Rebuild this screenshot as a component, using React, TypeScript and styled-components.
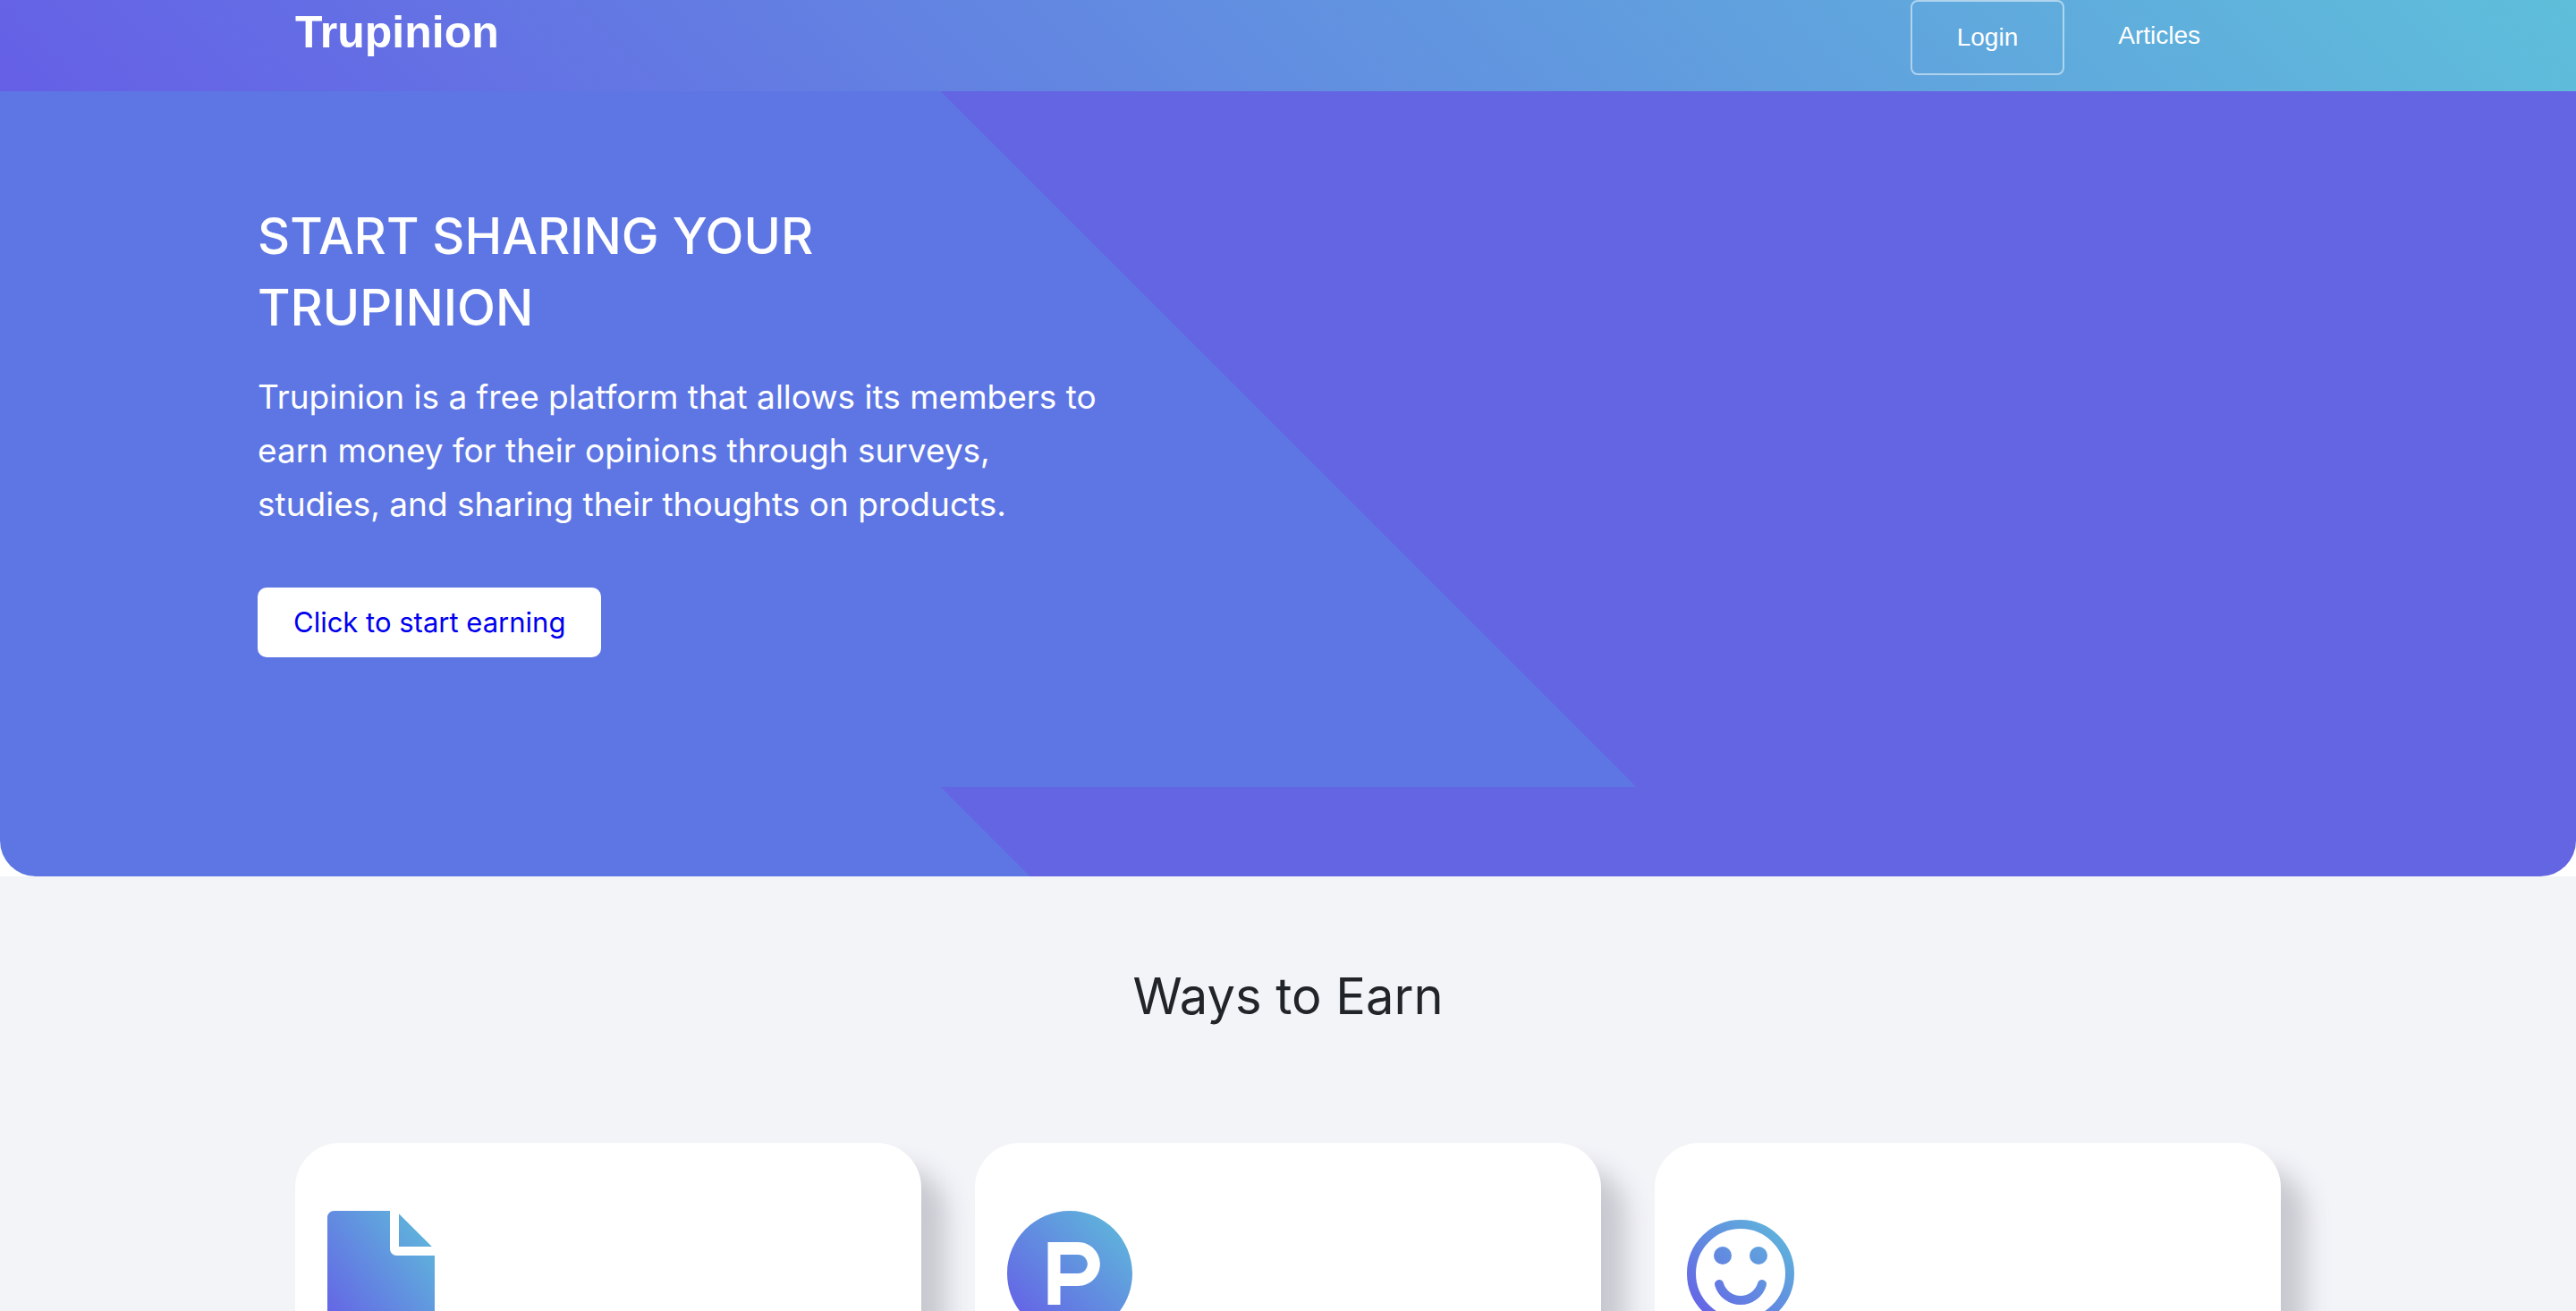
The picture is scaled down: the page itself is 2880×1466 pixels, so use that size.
import React from "react";
import styled, { createGlobalStyle } from "styled-components";

const GlobalStyle = createGlobalStyle`
  *, *::before, *::after { box-sizing: border-box; }
  body {
    margin: 0;
    background: #fff;
    color: #212529;
    font-family: Inter, "Liberation Sans", sans-serif;
  }
  h1, h2, p { margin: 0; font-weight: 400; }
  a { text-decoration: none; }
`;

const Page = styled.div`
  height: 100vh;
  overflow: hidden;
`;

const Header = styled.header`
  background: linear-gradient(45deg, #655fe6, #5ebfda);
  font-family: "Liberation Sans", Arial, sans-serif;
`;

const Container = styled.div`
  max-width: 2280px;
  margin: 0 auto;
  padding: 0 30px;
`;

const Bar = styled(Container)`
  display: flex;
  justify-content: space-between;
  align-items: flex-start;
  padding-bottom: 18px;
`;

const Brand = styled.a`
  color: #fff;
  font-size: 50px;
  font-weight: 700;
  line-height: 72px;
`;

const Nav = styled.nav`
  display: flex;
  gap: 60px;
  padding-right: 90px;
`;

const NavLink = styled.a`
  color: #fff;
  font-size: 28px;
  line-height: 80px;
`;

const LoginButton = styled.button`
  padding: 0 50px;
  border: 2px solid rgba(255, 255, 255, 0.5);
  border-radius: 8px;
  background: transparent;
  color: #fff;
  font-family: inherit;
  font-size: 28px;
  line-height: 80px;
`;

const Hero = styled.section`
  padding: 122px 10% 245px;
  border-radius: 0 0 40px 40px;
  background-image: linear-gradient(45deg, #5e76e3 50%, #6465e3 50%);
  background-size: 100% calc(100% - 100px);
`;

const HeroTitle = styled.h1`
  font-size: 56px;
  font-weight: 500;
  line-height: 80px;
  color: #fff;
`;

const HeroText = styled.p`
  margin: 30px 0 63px;
  font-size: 37px;
  line-height: 60px;
  color: #fff;
`;

const StartLink = styled.a`
  display: inline-block;
  padding: 0 40px;
  border-radius: 10px;
  background: #fff;
  color: #0000ee;
  font-size: 31px;
  line-height: 78px;
`;

const Ways = styled.section`
  background: #f3f4f8;
`;

const WaysTitle = styled.h2`
  padding: 92px 0;
  font-size: 56px;
  line-height: 84px;
  text-align: center;
`;

const Cards = styled.div`
  display: grid;
  grid-template-columns: repeat(3, 1fr);
  gap: 60px;
  padding: 30px 0 60px;
`;

const Card = styled.article`
  min-height: 800px;
  padding: 76px 36px;
  border-radius: 50px;
  background: #fff;
  box-shadow: 28px 28px 28px #c8c9d0;
`;

const Icon = styled.svg`
  display: block;
`;

const IconGradient = ({ id }: { id: string }) => (
  <linearGradient id={id} x1="0" y1="1" x2="1" y2="0">
    <stop offset="0.08" stopColor="#655fe6" />
    <stop offset="1" stopColor="#5ebfda" />
  </linearGradient>
);

const FileIcon = () => (
  <Icon width="120" height="160" viewBox="0 0 384 512" aria-hidden="true">
    <IconGradient id="file-fill" />
    <path
      fill="url(#file-fill)"
      d="M224 136V0H24C10.700 0 0 10.700 0 24v464c0 13.300 10.700 24 24 24h336c13.300 0 24-10.700 24-24V160H248c-13.200 0-24-10.800-24-24zM374 128H256V10z"
    />
  </Icon>
);

const ProductIcon = () => (
  <Icon width="140" height="140" viewBox="8 8 496 496" aria-hidden="true">
    <IconGradient id="product-fill" />
    <path
      fill="url(#product-fill)"
      d="M326.300 218.800c0 20.500-16.700 37.200-37.200 37.200h-70.300v-74.400h70.300c20.500 0 37.200 16.700 37.200 37.200zM504 256c0 137-111 248-248 248S8 393 8 256 119 8 256 8s248 111 248 248zm-128.100-37.200c0-47.900-38.900-86.800-86.800-86.800H169.200v248h49.600v-74.400h70.300c47.900 0 86.800-38.900 86.800-86.800z"
    />
  </Icon>
);

const SmileIcon = () => (
  <Icon width="120" height="140" viewBox="0 0 120 140" aria-hidden="true">
    <linearGradient
      id="smile-fill"
      gradientUnits="userSpaceOnUse"
      x1="0"
      y1="130"
      x2="120"
      y2="10"
    >
      <stop offset="0.08" stopColor="#655fe6" />
      <stop offset="1" stopColor="#5ebfda" />
    </linearGradient>
    <g fill="none" stroke="url(#smile-fill)" strokeWidth="10" strokeLinecap="round">
      <circle cx="60" cy="70" r="55" />
      <path d="M36 82A25 25 0 0 0 84 82" />
    </g>
    <g fill="url(#smile-fill)">
      <circle cx="40" cy="50" r="10" />
      <circle cx="80" cy="50" r="10" />
    </g>
  </Icon>
);

const icons = [FileIcon, ProductIcon, SmileIcon];

export default function App() {
  return (
    <Page>
      <GlobalStyle />
      <Header>
        <Bar>
          <Brand href="#">Trupinion</Brand>
          <Nav>
            <LoginButton type="button">Login</LoginButton>
            <NavLink href="#">Articles</NavLink>
          </Nav>
        </Bar>
      </Header>
      <Hero>
        <HeroTitle>
          START SHARING YOUR
          <br />
          TRUPINION
        </HeroTitle>
        <HeroText>
          Trupinion is a free platform that allows its members to
          <br />
          earn money for their opinions through surveys,
          <br />
          studies, and sharing their thoughts on products.
        </HeroText>
        <StartLink href="#">Click to start earning</StartLink>
      </Hero>
      <Ways>
        <Container>
          <WaysTitle>Ways to Earn</WaysTitle>
          <Cards>
            {icons.map((CardIcon, index) => (
              <Card key={index}>
                <CardIcon />
              </Card>
            ))}
          </Cards>
        </Container>
      </Ways>
    </Page>
  );
}
